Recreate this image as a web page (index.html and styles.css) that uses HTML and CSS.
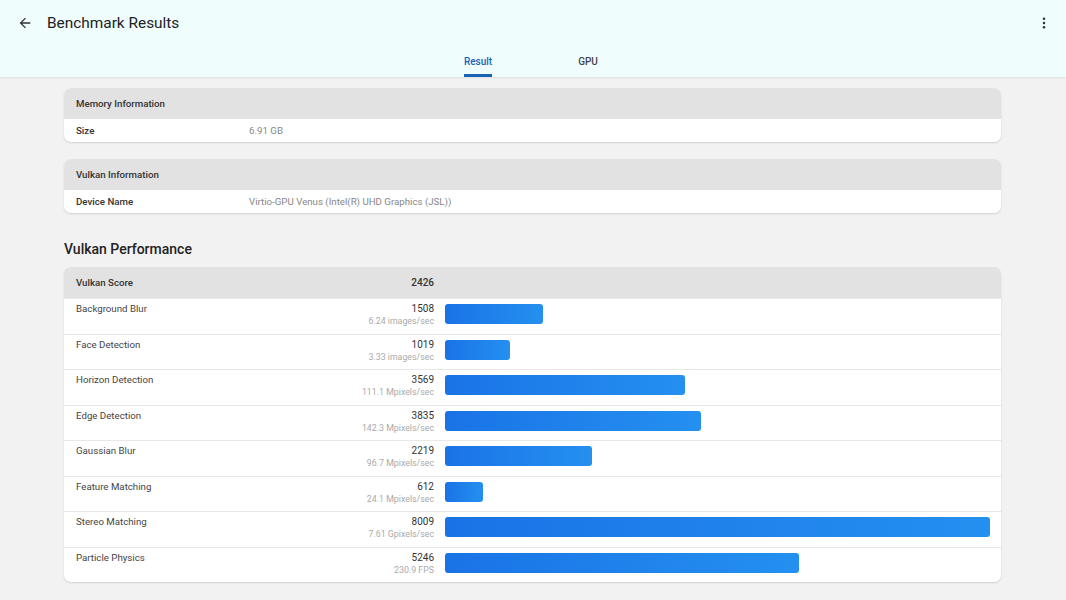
FILE: index.html
```html
<!DOCTYPE html>
<html>
<head>
<meta charset="utf-8">
<link rel="stylesheet" href="styles.css">
</head>
<body>
<header class="appbar">
  <div class="topbar">
    <svg class="back" viewBox="0 0 24 24" width="16" height="16"><path d="M20 11H7.83l5.59-5.59L12 4l-8 8 8 8 1.41-1.41L7.83 13H20v-2z" fill="#333"/></svg>
    <div class="title">Benchmark Results</div>
    <svg class="more" viewBox="0 0 24 24" width="16" height="16"><circle cx="12" cy="5.5" r="1.9" fill="#333"/><circle cx="12" cy="12" r="1.9" fill="#333"/><circle cx="12" cy="18.5" r="1.9" fill="#333"/></svg>
  </div>
  <nav class="tabs">
    <div class="tab active"><span>Result</span></div>
    <div class="tab"><span>GPU</span></div>
  </nav>
</header>
<main class="content">
  <section class="card">
    <div class="card-head">Memory Information</div>
    <div class="info-row"><div class="key">Size</div><div class="val">6.91 GB</div></div>
  </section>
  <section class="card">
    <div class="card-head">Vulkan Information</div>
    <div class="info-row"><div class="key">Device Name</div><div class="val">Virtio-GPU Venus (Intel(R) UHD Graphics (JSL))</div></div>
  </section>
  <h2 class="section-title">Vulkan Performance</h2>
  <section class="card">
    <div class="perf-head"><div class="name">Vulkan Score</div><div class="score">2426</div></div>
    <div class="perf-row"><div class="name">Background Blur</div><div class="score"><div class="num">1508</div><div class="sub">6.24 images/sec</div></div><div class="barwrap"><div class="bar" style="width:98px"></div></div></div>
    <div class="perf-row"><div class="name">Face Detection</div><div class="score"><div class="num">1019</div><div class="sub">3.33 images/sec</div></div><div class="barwrap"><div class="bar" style="width:65px"></div></div></div>
    <div class="perf-row"><div class="name">Horizon Detection</div><div class="score"><div class="num">3569</div><div class="sub">111.1 Mpixels/sec</div></div><div class="barwrap"><div class="bar" style="width:240px"></div></div></div>
    <div class="perf-row"><div class="name">Edge Detection</div><div class="score"><div class="num">3835</div><div class="sub">142.3 Mpixels/sec</div></div><div class="barwrap"><div class="bar" style="width:256px"></div></div></div>
    <div class="perf-row"><div class="name">Gaussian Blur</div><div class="score"><div class="num">2219</div><div class="sub">96.7 Mpixels/sec</div></div><div class="barwrap"><div class="bar" style="width:147px"></div></div></div>
    <div class="perf-row"><div class="name">Feature Matching</div><div class="score"><div class="num">612</div><div class="sub">24.1 Mpixels/sec</div></div><div class="barwrap"><div class="bar" style="width:38px"></div></div></div>
    <div class="perf-row"><div class="name">Stereo Matching</div><div class="score"><div class="num">8009</div><div class="sub">7.61 Gpixels/sec</div></div><div class="barwrap"><div class="bar" style="width:545px"></div></div></div>
    <div class="perf-row"><div class="name">Particle Physics</div><div class="score"><div class="num">5246</div><div class="sub">230.9 FPS</div></div><div class="barwrap"><div class="bar" style="width:354px"></div></div></div>
  </section>
</main>
</body>
</html>
```
FILE: styles.css
```css
* { box-sizing: border-box; }
html, body { margin: 0; padding: 0; }
body {
  background: #f2f2f2;
  font-family: Roboto, "Noto Sans", sans-serif;
  color: #333;
  width: 1066px;
  height: 600px;
  overflow: hidden;
}
.appbar {
  background: #f0fdfd;
  height: 77px;
  box-shadow: 0 1px 2px rgba(0,0,0,0.08);
  position: relative;
}
.topbar {
  height: 45px;
  display: flex;
  align-items: center;
  padding: 0 14px 0 17px;
}
.back { display: block; margin-right: 14px; }
.title {
  font-size: 15.4px;
  color: #222;
  flex: 1;
  margin-top: 1px;
}
.more { display: block; }
.tabs {
  display: flex;
  justify-content: center;
  height: 32px;
}
.tab {
  width: 110px;
  display: flex;
  justify-content: center;
  font-size: 10px;
  font-weight: 500;
  color: #444;
}
.tab span {
  display: block;
  padding-top: 11px;
  height: 32px;
  border-bottom: 3px solid transparent;
}
.tab.active { color: #1863b4; }
.tab.active span { border-bottom-color: #1863b4; }
.content {
  padding: 11px 65px 0 64px;
  display: flex;
  flex-direction: column;
}
.card {
  background: #fff;
  border-radius: 7px;
  box-shadow: 0 1px 2px rgba(0,0,0,0.14);
  overflow: hidden;
  margin-bottom: 17px;
}
.card-head {
  height: 31px;
  background: #e2e2e2;
  font-size: 9.7px;
  font-weight: 500;
  color: #333;
  display: flex;
  align-items: center;
  padding-left: 12px;
}
.info-row {
  height: 23px;
  display: flex;
  align-items: center;
  font-size: 9.7px;
  padding-left: 12px;
}
.info-row .key { width: 173px; font-weight: 500; color: #333; }
.info-row .val { color: #888; }
.section-title {
  margin: 10px 0 8px;
  font-size: 14px;
  font-weight: 500;
  color: #222;
  height: 19px;
  line-height: 19px;
}
.perf-head {
  height: 31px;
  background: #e2e2e2;
  display: flex;
  align-items: center;
  font-size: 9.7px;
  font-weight: 500;
  padding-left: 12px;
}
.perf-head .name { flex: 1; }
.perf-head .score { width: 140px; text-align: right; margin-right: 567px; font-size: 10px; }
.perf-row {
  height: 35.5px;
  border-top: 1px solid #e8e8e8;
  display: flex;
  align-items: flex-start;
  padding-left: 12px;
  font-size: 9.7px;
}
.perf-row .name { flex: 1; color: #444; padding-top: 4px; }
.perf-row .score { width: 140px; text-align: right; padding-top: 4px; }
.perf-row .num { color: #333; line-height: 12px; font-size: 10px; }
.perf-row .sub { color: #aaa; font-size: 8.8px; line-height: 13px; }
.barwrap {
  width: 567px;
  padding: 5px 0 0 11px;
}
.bar {
  height: 20px;
  border-radius: 3px;
  background: linear-gradient(90deg, #1a73e6, #2490f0);
}
```
